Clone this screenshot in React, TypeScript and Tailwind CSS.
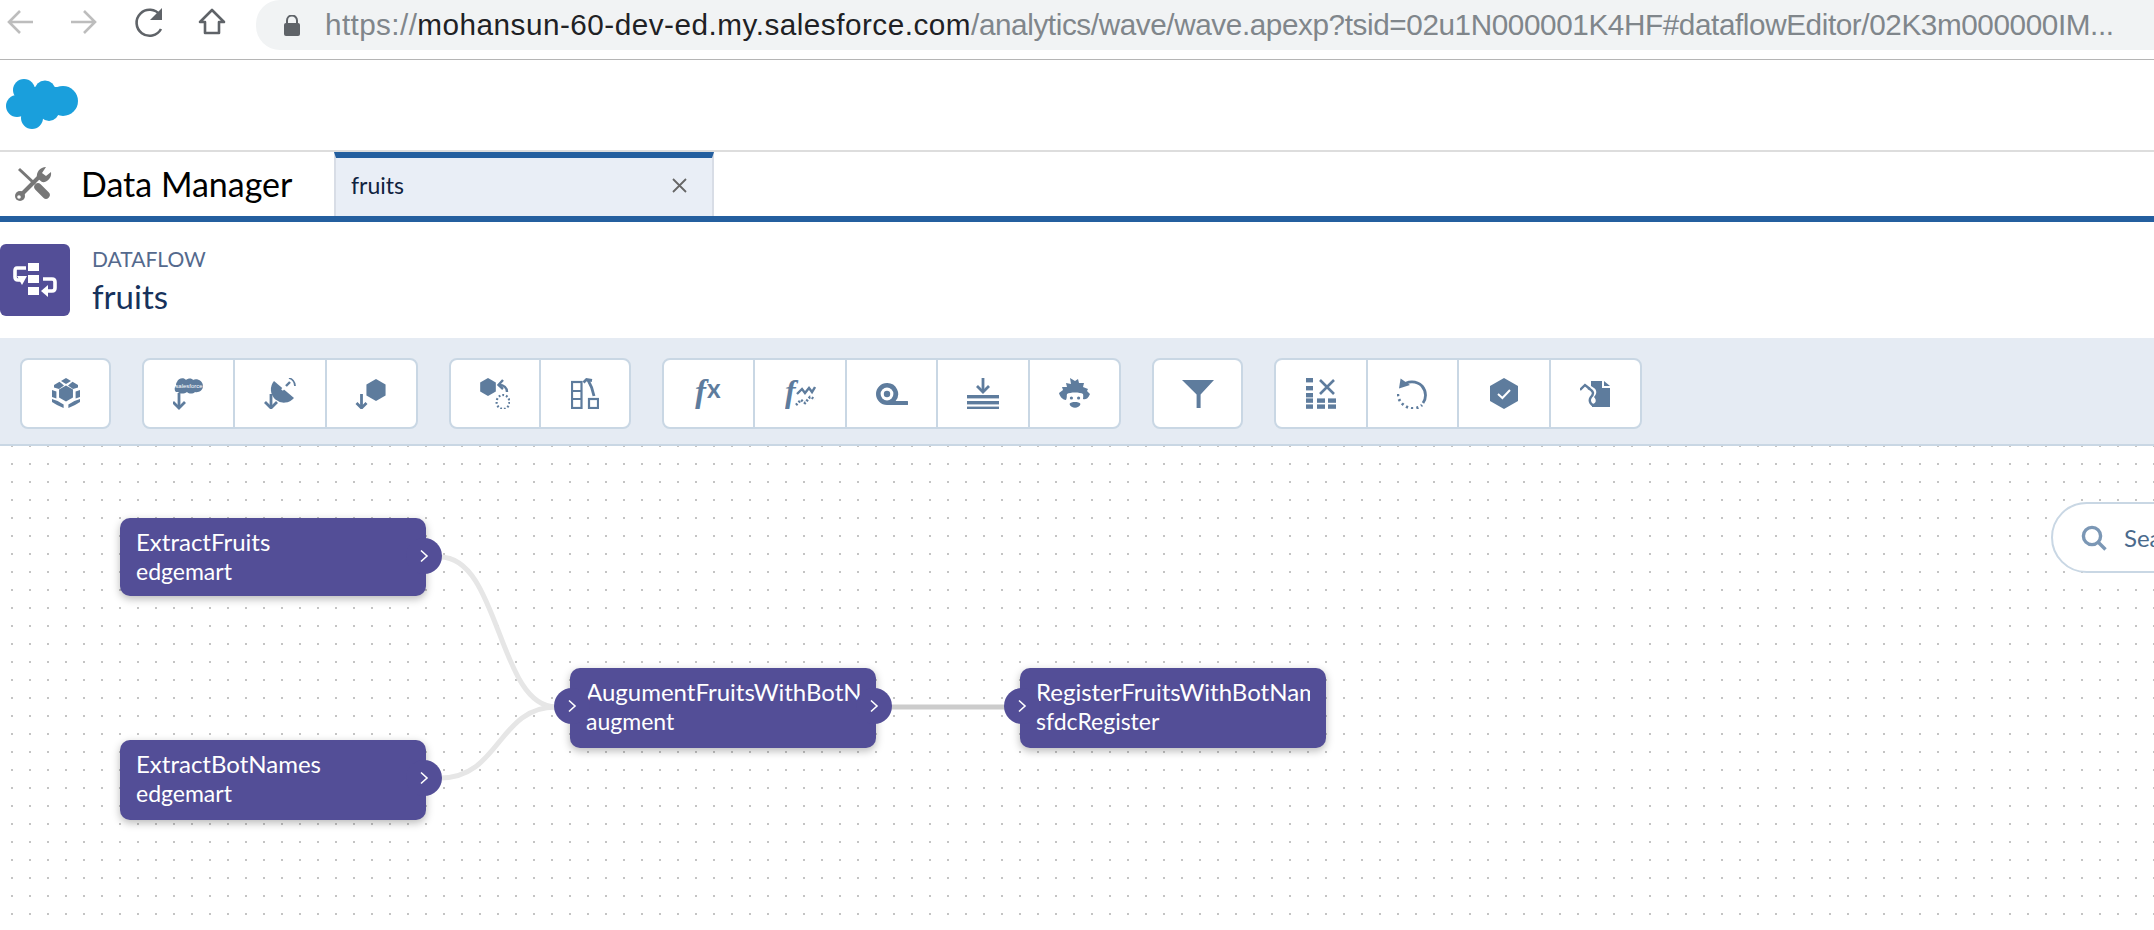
import React from "react";

const ICON = "#5e7c9d";
const SF = "font-['Lato','Open_Sans',sans-serif]";

function Icon({ w = 32, h = 32, children }: { w?: number; h?: number; children: React.ReactNode }) {
  return (
    <svg width={w} height={h} viewBox={`0 0 ${w} ${h}`} fill={ICON} stroke="none">
      {children}
    </svg>
  );
}

// small down arrow used by the digest icons
function DownArrow({ x, y1, y2, s = 6 }: { x: number; y1: number; y2: number; s?: number }) {
  return (
    <g stroke={ICON} strokeWidth="2.8" fill="none">
      <line x1={x} y1={y1} x2={x} y2={y2} />
      <polyline points={`${x - s},${y2 - s} ${x},${y2} ${x + s},${y2 - s}`} />
    </g>
  );
}

const hex = (cx: number, cy: number, r: number) =>
  `${cx},${cy - r} ${cx + r * 0.87},${cy - r / 2} ${cx + r * 0.87},${cy + r / 2} ${cx},${cy + r} ${cx - r * 0.87},${cy + r / 2} ${cx - r * 0.87},${cy - r / 2}`;

const icons: Record<string, React.ReactNode> = {
  cube: (
    <Icon w={30} h={31}>
      <polygon points={hex(15, 15.5, 8)} />
      <polygon points="15,0 20,3 15,6 10,3" />
      <polygon points="21.5,3.8 27,7 27,9.6 22,11 17,7.4" />
      <polygon points="8.5,3.8 3,7 3,9.6 8,11 13,7.4" />
      <polygon points="1,12 5.4,13.6 5.4,20.6 1,19" />
      <polygon points="29,12 24.6,13.6 24.6,20.6 29,19" />
      <polygon points="1,21 6.6,23 12.6,26.4 12.6,30 6,27 1,24" />
      <polygon points="29,21 23.4,23 17.4,26.4 17.4,30 24,27 29,24" />
    </Icon>
  ),
  sfdigest: (
    <Icon w={31} h={32}>
      <path d="M4 4 C5 0 11 -1 13 2 C15 0 19 0 20 2 C24 0 30 3 30 8 C30 12 26 15 22 14 C20 16 16 16 14 14 C11 16 7 16 5 14 C1 15 1 9 3 8 C3 6 3 5 4 4 Z" />
      <text x="16" y="9.6" fontSize="6" fill="#fff" textAnchor="middle" fontFamily="'Liberation Sans',sans-serif">salesforce</text>
      <DownArrow x={6} y1={15} y2={30} />
    </Icon>
  ),
  satellite: (
    <Icon w={32} h={31}>
      <path d="M10 3 A13 13 0 0 0 30 20 Z" />
      <line x1="18" y1="12" x2="23" y2="7" stroke="#fff" strokeWidth="2.4" />
      <line x1="22" y1="8" x2="26" y2="4" stroke={ICON} strokeWidth="2.4" />
      <path d="M25 0 C28 1 31 4 31 8" stroke={ICON} strokeWidth="1.8" fill="none" />
      <DownArrow x={7} y1={16} y2={30} />
    </Icon>
  ),
  edgemart: (
    <Icon w={32} h={30}>
      <polygon points={hex(21, 11, 11)} />
      <DownArrow x={6.5} y1={15} y2={29} s={5} />
    </Icon>
  ),
  recycleHex: (
    <Icon w={30} h={31}>
      <polygon points={hex(8, 9, 9)} />
      <path d="M27 14 C27 10 24 7 19 7" stroke={ICON} strokeWidth="2.4" fill="none" />
      <polyline points="23,2 18.5,7 23,11" stroke={ICON} strokeWidth="2.4" fill="none" />
      <ellipse cx="23" cy="24" rx="6.4" ry="7" fill="none" stroke={ICON} strokeWidth="2.2" strokeDasharray="1.8 2" />
    </Icon>
  ),
  slice: (
    <Icon w={28} h={31}>
      <rect x="1" y="4" width="9.5" height="26" fill="none" stroke={ICON} strokeWidth="2.2" />
      <rect x="2" y="12" width="8" height="2" />
      <rect x="2" y="20" width="8" height="2" />
      <rect x="18" y="21" width="9" height="9" fill="none" stroke={ICON} strokeWidth="2.2" />
      <path d="M23 18 C22 12 20 7 17 2" stroke={ICON} strokeWidth="2.8" fill="none" />
      <polyline points="12.5,4.5 15.5,1.5 21,2.5" stroke={ICON} strokeWidth="2.8" fill="none" />
    </Icon>
  ),
  fx: (
    <Icon w={30} h={31}>
      <text x="1" y="25" fontSize="33" fontStyle="italic" fontWeight="700" fontFamily="'Liberation Serif',serif">f</text>
      <text x="13" y="20" fontSize="26" fontWeight="700" fontFamily="'Lato',sans-serif">x</text>
    </Icon>
  ),
  fxChart: (
    <Icon w={31} h={31}>
      <text x="0" y="24" fontSize="32" fontStyle="italic" fontWeight="700" fontFamily="'Liberation Serif',serif">f</text>
      <polyline points="12,16 17,11 20,15 24,10 27,14 30,9" fill="none" stroke={ICON} strokeWidth="2.4" />
      <polyline points="11,27 16,22 20,25 25,19 30,21" fill="none" stroke={ICON} strokeWidth="2.6" strokeDasharray="2 1.6" />
    </Icon>
  ),
  tape: (
    <Icon w={32} h={22}>
      <path d="M11 0 A11 11 0 1 0 11 22 L31 22 A1.6 1.6 0 0 0 31 18 L19.6 18 A11 11 0 0 0 11 0 Z" />
      <circle cx="11" cy="11" r="6.4" fill="#fff" />
      <circle cx="11" cy="11" r="3.2" />
    </Icon>
  ),
  flatten: (
    <Icon w={32} h={31}>
      <DownArrow x={16} y1={0} y2={14} s={6} />
      <rect x="0" y="17" width="32" height="3.4" />
      <rect x="0" y="23" width="32" height="3.4" />
      <rect x="0" y="28.6" width="32" height="2.4" />
    </Icon>
  ),
  einstein: (
    <Icon w={31} h={31}>
      <path d="M0 15 L4 12 L3 9 L8 9 L7 5 L12 6 L11 0 L16 3 L19 1 L20 5 L25 5 L24 9 L29 11 L28 13 L31 16 C29 21 26 22 24 21 L24 19 L8 19 L7 22 C4 22 1 19 0 15 Z" />
      <path d="M8 16 C11 14 21 14 24 16 C25 21 23 26 16 26 C9 26 7 21 8 16 Z" fill="#fff" />
      <circle cx="12.4" cy="20" r="1.6" />
      <circle cx="19.6" cy="20" r="1.6" />
      <path d="M10.5 26 C12 23.4 20 23.4 21.5 26 C20 31 12 31 10.5 26 Z" />
    </Icon>
  ),
  filter: (
    <Icon w={32} h={28}>
      <polygon points="0,0 32,0 18.6,14.5 18.6,28 14.6,28 14.6,14.5" />
    </Icon>
  ),
  dropFields: (
    <Icon w={30} h={31}>
      <rect x="0" y="0" width="7" height="4.4" />
      <rect x="0" y="8" width="7" height="4.4" />
      <rect x="0" y="15" width="7" height="4.4" />
      <rect x="0" y="20.4" width="7" height="4.4" />
      <rect x="0" y="26.4" width="7" height="4.4" />
      <rect x="11" y="20.4" width="8" height="4.4" />
      <rect x="11" y="26.4" width="8" height="4.4" />
      <rect x="22" y="20.4" width="8" height="4.4" />
      <rect x="22" y="26.4" width="8" height="4.4" />
      <path d="M14 2 L28 16 M28 2 L14 16" stroke={ICON} strokeWidth="2.6" />
    </Icon>
  ),
  undo: (
    <Icon w={30} h={31}>
      <path d="M5 8 C10 3 19 2 25 8 C30 14 29 21 26 25" stroke={ICON} strokeWidth="2.8" fill="none" />
      <polygon points="2,10.6 3.6,0.6 13,7" />
      <path d="M0.8 16 C1 24 9 31 17 30.4 C21 30 23.6 28.6 25 27" stroke={ICON} strokeWidth="2.8" fill="none" strokeDasharray="2.2 3" />
    </Icon>
  ),
  checkHex: (
    <Icon w={28} h={31}>
      <polygon points="14,0 28,8 28,23 14,31 0,23 0,8" />
      <polyline points="8,16 12.4,20 20,12" fill="none" stroke="#fff" strokeWidth="2" />
    </Icon>
  ),
  linkDoc: (
    <Icon w={30} h={26}>
      <path d="M11 0 L22 0 L22 7 L30 7 L30 26 L12 26 L12 23 C16 23 17 19 14 16 C17 13 17 9 14 7 L11 5 Z" />
      <polygon points="24,0 30,5 24,5" />
      <path d="M17 26 C11 25 8 20 11 16 C14 13 14 10 8 7" stroke={ICON} strokeWidth="2.4" fill="none" />
      <polyline points="0,9 5,4 10,8" stroke={ICON} strokeWidth="2.4" fill="none" />
    </Icon>
  ),
};

const groups = [
  { width: "w-[91px]", items: ["cube"] },
  { width: "w-[276px]", items: ["sfdigest", "satellite", "edgemart"] },
  { width: "w-[182px]", items: ["recycleHex", "slice"] },
  { width: "w-[459px]", items: ["fx", "fxChart", "tape", "flatten", "einstein"] },
  { width: "w-[91px]", items: ["filter"] },
  { width: "w-[368px]", items: ["dropFields", "undo", "checkHex", "linkDoc"] },
];

function Port({ side }: { side: "left" | "right" }) {
  return (
    <div
      className={`absolute top-[20px] flex size-9 items-center justify-center rounded-full bg-[#534e97] ${
        side === "left" ? "left-[-16px]" : "right-[-16px]"
      }`}
    >
      <svg width="10" height="14" viewBox="0 0 10 14" fill="none" stroke="#fff" strokeWidth="1.6">
        <polyline points="2,1.5 8,7 2,12.5" />
      </svg>
    </div>
  );
}

function Node({ pos, name, type, input, output = true }: { pos: string; name: string; type: string; input?: boolean; output?: boolean }) {
  return (
    <div className={`absolute ${pos} w-[306px] rounded-[10px] bg-[#534e97] pl-[16px] pt-[8px] text-white shadow-[0_3px_9px_rgba(0,0,0,0.28)]`}>
      {input && <Port side="left" />}
      <div className="w-[274px] overflow-hidden whitespace-nowrap text-[24px] leading-[32px]">{name}</div>
      <div className="text-[23px] leading-[26px]">{type}</div>
      {output && <Port side="right" />}
    </div>
  );
}

export default function App() {
  return (
    <div className={`h-[930px] w-[2154px] overflow-hidden bg-white ${SF}`}>
      {/* browser chrome */}
      <div className="flex h-[60px] border-b border-[#b5b5b5]">
        <div className="flex h-[50px] w-[256px] shrink-0 items-center">
          <svg width="256" height="50" viewBox="0 0 256 50" fill="none">
            <g stroke="#bdbdbd" strokeWidth="2.6">
              <path d="M33 22 H9 M20 11 L9 22 L20 33" />
              <path d="M71 22 H95 M84 11 L95 22 L84 33" />
            </g>
            <g stroke="#5f6368" strokeWidth="2.6">
              <path d="M160 15 A13 13 0 1 0 161 29" />
              <polygon points="162,8 162,20 150,20" fill="#5f6368" stroke="none" />
              <path d="M200 22 L212 10 L224 22 H219 V33 H205 V22 Z" strokeLinejoin="round" />
            </g>
          </svg>
        </div>
        <div className="flex h-[50px] flex-1 items-center rounded-bl-[24px] rounded-tl-[24px] bg-[#f1f3f4] pl-[28px]">
          <svg width="16" height="21" viewBox="0 0 16 21" fill="#5f6368" className="mr-[25px] shrink-0">
            <path d="M3 8 V5.5 A5 5 0 0 1 13 5.5 V8" fill="none" stroke="#5f6368" strokeWidth="2" />
            <rect x="0" y="8" width="16" height="13" rx="2" />
          </svg>
          <span className="whitespace-nowrap font-['Liberation_Sans',sans-serif] text-[29.7px] tracking-[-0.4px] text-[#80868b]">
            <span className="tracking-[0.4px]">https://</span>
            <span className="tracking-[0.5px] text-[#202124]">mohansun-60-dev-ed.my.salesforce.com</span>/analytics/wave/wave.apexp?tsid=02u1N000001K4HF#dataflowEditor/02K3m000000IM...
          </span>
        </div>
      </div>

      {/* logo row */}
      <div className="flex h-[92px] items-center border-b-2 border-[#dddddd] pl-[6px]">
        <svg width="73" height="50" viewBox="0 0 73 50" fill="#1a9fdc" className="mt-[-2px]">
          <circle cx="18" cy="11" r="11" />
          <circle cx="39" cy="12" r="10.5" />
          <circle cx="57" cy="22" r="15" />
          <circle cx="11" cy="27" r="11" />
          <circle cx="26" cy="39" r="11" />
          <circle cx="43" cy="32" r="10" />
          <rect x="14" y="8" width="40" height="28" />
        </svg>
      </div>

      {/* app tab bar */}
      <div className="flex h-[70px] border-b-[6px] border-[#245f9f]">
        <div className="flex w-[334px] items-center gap-[29px] pl-[15px]">
          <svg width="37" height="34" viewBox="0 0 37 34" fill="#777">
            <line x1="4" y1="2" x2="20" y2="17" stroke="#777" strokeWidth="3" />
            <line x1="23" y1="20" x2="31" y2="28" stroke="#777" strokeWidth="7.5" strokeLinecap="round" />
            <line x1="7" y1="27" x2="24" y2="10" stroke="#777" strokeWidth="4" />
            <path d="M31 0 C25 0 21 5 22 11 L27 15 C32 16 37 11 36 5 L31 9 L27 6 Z" />
            <circle cx="5" cy="29" r="5" />
            <circle cx="4" cy="30" r="1.8" fill="#fff" />
          </svg>
          <span className="text-[34px] leading-none text-black">Data Manager</span>
        </div>
        <div className="flex w-[380px] items-center justify-between border-x-2 border-t-[6px] border-x-[#d8dde6] border-t-[#245f9f] bg-[#e9eef6] pb-[3px] pl-[15px] pr-[25px]">
          <span className="text-[23px] text-[#10233f]">fruits</span>
          <svg width="15" height="15" viewBox="0 0 15 15" stroke="#666" strokeWidth="1.8">
            <path d="M1 1 L14 14 M14 1 L1 14" />
          </svg>
        </div>
      </div>

      {/* page header */}
      <div className="flex h-[116px] gap-[22px] pt-[22px]">
        <div className="h-[72px] w-[70px] rounded-[6px] bg-[#534e97]">
          <svg width="70" height="72" viewBox="0 0 70 72" fill="#fff">
            <rect x="28" y="19" width="11" height="8" />
            <rect x="28" y="31" width="11" height="8" />
            <rect x="28" y="43" width="11" height="8" />
            <path d="M26 24 H17 Q15 24 15 27 V33 Q15 36 18 36 H22" fill="none" stroke="#fff" strokeWidth="3.6" />
            <polygon points="17,32 27,32 22,41" />
            <path d="M43 35 H52 Q55 35 55 38 V44 Q55 47 52 47 H47" fill="none" stroke="#fff" strokeWidth="3.6" />
            <polygon points="48,41 48,53 41,47" />
          </svg>
        </div>
        <div>
          <div className="text-[21px] leading-[30px] text-[#54698d]">DATAFLOW</div>
          <div className="text-[33px] leading-[44px] text-[#16325c]">fruits</div>
        </div>
      </div>

      {/* transformation toolbar */}
      <div className="flex h-[108px] gap-[31px] border-b-2 border-[#c9d7e4] bg-[#e5ebf3] pl-[20px] pt-[20px]">
        {groups.map((g, i) => (
          <div key={i} className={`flex h-[71px] ${g.width} divide-x-2 divide-[#c9d7e4] rounded-[8px] border-2 border-[#c9d7e4] bg-white`}>
            {g.items.map((name) => (
              <div key={name} className="flex flex-1 items-center justify-center">
                {icons[name]}
              </div>
            ))}
          </div>
        ))}
      </div>

      {/* dataflow canvas */}
      <div className="relative h-[484px] bg-[radial-gradient(circle_at_1px_1px,#c4c4c4_1.2px,transparent_1.4px)] bg-[size:18px_18px] bg-[position:11px_-1px]">
        <svg className="absolute inset-0" width="2154" height="484" fill="none" strokeWidth="5">
          <path d="M440 111 C500 111 498 261 556 261" stroke="#e6e6e6" />
          <path d="M440 332 C500 332 498 261 556 261" stroke="#e6e6e6" />
          <path d="M890 261 H1006" stroke="#cccccc" />
        </svg>
        <Node pos="left-[120px] top-[72px] h-[78px]" name="ExtractFruits" type="edgemart" />
        <Node pos="left-[120px] top-[294px] h-[80px]" name="ExtractBotNames" type="edgemart" />
        <Node pos="left-[570px] top-[222px] h-[80px]" name="AugumentFruitsWithBotNames" type="augment" input />
        <Node pos="left-[1020px] top-[222px] h-[80px]" name="RegisterFruitsWithBotNames" type="sfdcRegister" input output={false} />
        {/* search box runs off the right edge of the shot */}
        <div className="absolute left-[2051px] top-[56px] flex h-[71px] w-[300px] items-center gap-[17px] rounded-full border-2 border-[#c9d7e4] bg-white pl-[28px]">
          <svg width="26" height="26" viewBox="0 0 26 26" fill="none" stroke="#7b97b5" strokeWidth="3.4">
            <circle cx="11" cy="11" r="8.6" />
            <path d="M17 17 L24.5 24.5" />
          </svg>
          <span className="text-[24px] text-[#4a6a8c]">Search</span>
        </div>
      </div>
    </div>
  );
}
